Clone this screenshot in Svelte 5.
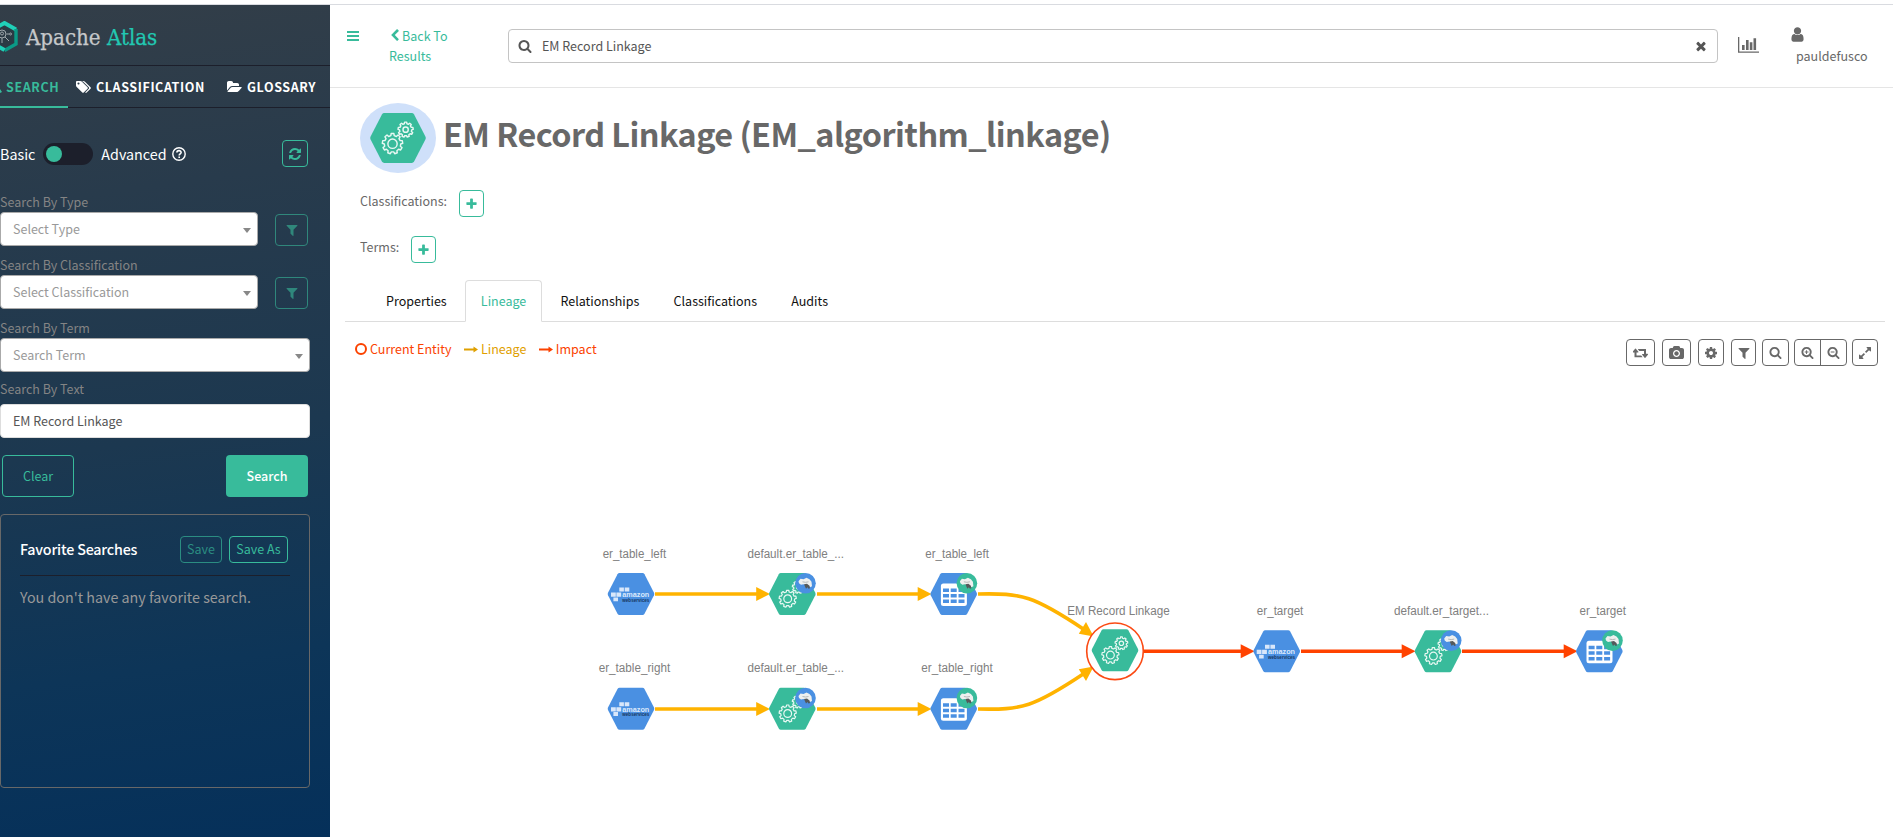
<script>
  const search = 'M1216 832q0-185-131.5-316.5t-316.5-131.5-316.5 131.5-131.5 316.5 131.5 316.5 316.5 131.5 316.5-131.5 131.5-316.5zm512 832q0 52-38 90t-90 38q-54 0-90-38l-343-342q-179 124-399 124-143 0-273.5-55.5t-225-150-150-225-55.5-273.5 55.5-273.5 150-225 225-150 273.5-55.5 273.5 55.5 225 150 150 225 55.5 273.5q0 220-124 399l343 343q37 37 37 90z';
  const plusBar = 'M704 576h128v192h192v128h-192v192h-128v-192h-192v-128h192z';
  const minusBar = 'M512 768h512v128h-512z';
  const filter = 'M1595 295q17 41-14 70l-493 493v742q0 42-39 59-13 5-25 5-27 0-45-19l-256-256q-19-19-19-45v-486l-493-493q-31-29-14-70 17-39 59-39h1280q42 0 59 39z';
  const refresh = 'M1639 1056q0 5-1 7-64 268-268 434.5t-478 166.5q-146 0-282.5-55t-243.5-157l-129 129q-19 19-45 19t-45-19-19-45v-448q0-26 19-45t45-19h448q26 0 45 19t19 45-19 45l-137 137q71 66 161 102t187 36q134 0 250-65t186-179q11-17 53-117 8-23 30-23h192q13 0 22.5 9.5t9.5 22.5zm25-800v448q0 26-19 45t-45 19h-448q-26 0-45-19t-19-45 19-45l138-138q-148-137-349-137-134 0-250 65t-186 179q-11 17-53 117-8 23-30 23h-199q-13 0-22.5-9.5t-9.5-22.5v-7q65-268 270-434.5t480-166.5q146 0 284 55.5t245 156.5l130-129q19-19 45-19t45 19 19 45z';
  const camera = 'M896 672q119 0 203.5 84.5t84.5 203.5-84.5 203.5-203.5 84.5-203.5-84.5-84.5-203.5 84.5-203.5 203.5-84.5zm704-416q106 0 181 75t75 181v896q0 106-75 181t-181 75h-1408q-106 0-181-75t-75-181v-896q0-106 75-181t181-75h224l51-136q19-49 69.5-84.5t103.5-35.5h512q53 0 103.5 35.5t69.5 84.5l51 136h224zm-704 1152q185 0 316.5-131.5t131.5-316.5-131.5-316.5-316.5-131.5-316.5 131.5-131.5 316.5 131.5 316.5 316.5 131.5z';
  const cog = 'M1152 896q0-106-75-181t-181-75-181 75-75 181 75 181 181 75 181-75 75-181zm512-109v222q0 12-8 23t-20 13l-185 28q-19 54-39 91 35 50 107 138 10 12 10 25t-9 23q-27 37-99 108t-94 71q-12 0-26-9l-138-108q-44 23-91 38-16 136-29 186-7 28-36 28h-222q-14 0-24.5-8.5t-11.5-21.5l-28-184q-49-16-90-37l-141 107q-10 9-25 9-14 0-25-11-126-114-165-168-7-10-7-23 0-12 8-23 15-21 51-66.5t54-70.5q-27-50-41-99l-183-27q-13-2-21-12.5t-8-23.5v-222q0-12 8-23t19-13l186-28q14-46 39-92-40-57-107-138-10-12-10-24 0-10 9-23 26-36 98.5-107.5t94.5-71.5q13 0 26 10l138 107q44-23 91-38 16-136 29-186 7-28 36-28h222q14 0 24.5 8.5t11.5 21.5l28 184q49 16 90 37l142-107q9-9 24-9 13 0 25 10 129 119 165 170 7 8 7 22 0 12-8 23-15 21-51 66.5t-54 70.5q26 50 41 98l183 28q13 2 21 12.5t8 23.5z';
  const times = 'M1490 1322q0 40-28 68l-136 136q-28 28-68 28t-68-28l-294-294-294 294q-28 28-68 28t-68-28l-136-136q-28-28-28-68t28-68l294-294-294-294q-28-28-28-68t28-68l136-136q28-28 68-28t68 28l294 294 294-294q28-28 68-28t68 28l136 136q28 28 28 68t-28 68l-294 294 294 294q28 28 28 68z';
  const plus = 'M1600 736v192q0 40-28 68t-68 28h-416v416q0 40-28 68t-68 28h-192q-40 0-68-28t-28-68v-416h-416q-40 0-68-28t-28-68v-192q0-40 28-68t68-28h416v-416q0-40 28-68t68-28h192q40 0 68 28t28 68v416h416q40 0 68 28t28 68z';
  const folder = 'M1879 952q0 31-31 66l-336 396q-43 51-120.5 86.5t-143.5 35.5h-1088q-34 0-60.5-13t-26.5-43q0-31 31-66l336-396q43-51 120.5-86.5t143.5-35.5h1088q34 0 60.5 13t26.5 43zm-343-344v160h-832q-94 0-197 47.5t-164 119.5l-337 396-5 6q0-4-.5-12.5t-.5-12.5v-960q0-92 66-158t158-66h320q92 0 158 66t66 158v32h544q92 0 158 66t66 158z';
  const tags = 'M576 448q0-53-37.5-90.5t-90.5-37.5-90.5 37.5-37.5 90.5 37.5 90.5 90.5 37.5 90.5-37.5 37.5-90.5zm1067 576q0 53-37 90l-491 492q-39 37-91 37-53 0-90-37l-715-716q-38-37-64.5-101t-26.5-117v-416q0-52 38-90t90-38h416q53 0 117 26.5t102 64.5l715 714q37 39 37 91zm384 0q0 53-37 90l-491 492q-39 37-91 37-36 0-59-14t-53-45l470-470q37-37 37-90 0-52-37-91l-715-714q-38-38-102-64.5t-117-26.5h224q53 0 117 26.5t102 64.5l715 714q37 39 37 91z';
  const retweet = 'M1216 1408q0 13-9.500 22.500t-22.500 9.500h-960q-32 0-32-32v-576h-192q-26 0-45-19t-19-45q0-24 15-41l320-384q19-22 49-22t49 22l320 384q15 17 15 41 0 26-19 45t-45 19h-192v384h576q16 0 25 11l160 192q7 11 7 21zm704-320q0 24-15 41l-320 384q-20 23-49 23t-49-23l-320-384q-15-17-15-41 0-26 19-45t45-19h192v-384h-576q-16 0-25-12l-160-192q-7-9-7-20 0-13 9.500-22.500t22.500-9.500h960q32 0 32 32v576h192q26 0 45 19t19 45z';
  const expand = 'M883 1056q0 13-10 23l-332 332 144 144q19 19 19 45t-19 45-45 19h-448q-26 0-45-19t-19-45v-448q0-26 19-45t45-19 45 19l144 144 332-332q10-10 23-10t23 10l114 114q10 10 10 23zm781-864v448q0 26-19 45t-45 19-45-19l-144-144-332 332q-10 10-23 10t-23-10l-114-114q-10-10-10-23t10-23l332-332-144-144q-19-19-19-45t19-45 45-19h448q26 0 45 19t19 45z';
  const chevron = 'M1427 301l-531 531 531 531q19 19 19 45t-19 45l-166 166q-19 19-45 19t-45-19l-742-742q-19-19-19-45t19-45l742-742q19-19 45-19t45 19l166 166q19 19 19 45t-19 45z';
  const user = 'M1536 1399q0 109-62.500 187t-150.500 78h-854q-88 0-150.500-78t-62.500-187q0-85 8.500-160.500t31.500-152 58.500-131 94-89 134.500-34.500q131 128 313 128t313-128q76 0 134.500 34.500t94 89 58.500 131 31.500 152 8.500 160.500zm-256-887q0 159-112.500 271.500t-271.500 112.500-271.500-112.500-112.500-271.500 112.500-271.500 271.500-112.500 271.500 112.500 112.500 271.500z';

  // Closed outline of a cog with flat teeth
  function gear(cx, cy, r, teeth, depth) {
    let d = '';
    const step = (Math.PI * 2) / teeth;
    for (let i = 0; i < teeth; i++) {
      const a = i * step - Math.PI / 2;
      for (const [t, rad] of [[-0.3, r - depth], [-0.19, r], [0.19, r], [0.3, r - depth]]) {
        const x = cx + Math.cos(a + t * step) * rad;
        const y = cy + Math.sin(a + t * step) * rad;
        d += `${d ? 'L' : 'M'}${x.toFixed(2)} ${y.toFixed(2)}`;
      }
    }
    return d + 'Z';
  }
  const bigGear = gear(-4.6, 4.8, 8.6, 9, 1.7);
  const smallGear = gear(6.4, -7, 6.4, 9, 1.3);
  const hexagon = 'M-11.500 -21H11.500Q12.800 -21 13.500 -19.800L23 -1.200Q23.600 0 23 1.200L13.500 19.800Q12.800 21 11.500 21H-11.500Q-12.800 21 -13.500 19.800L-23 1.200Q-23.600 0 -23 -1.200L-13.500 -19.800Q-12.800 -21 -11.500 -21Z';

  const nodes = [
    { x: 631, y: 594, kind: 'aws', label: 'er_table_left', w: 63.5 },
    { x: 792.3, y: 594, kind: 'process', label: 'default.er_table_...', w: 96.5 },
    { x: 953.7, y: 594, kind: 'table', label: 'er_table_left', w: 63.5 },
    { x: 631, y: 708.7, kind: 'aws', label: 'er_table_right', w: 71.5 },
    { x: 792.3, y: 708.7, kind: 'process', label: 'default.er_table_...', w: 96.5 },
    { x: 953.7, y: 708.7, kind: 'table', label: 'er_table_right', w: 71.5 },
    { x: 1115, y: 650.3, kind: 'current', label: 'EM Record Linkage', w: 102.5 },
    { x: 1276.7, y: 651.3, kind: 'aws', label: 'er_target', w: 46.5 },
    { x: 1438, y: 651.3, kind: 'process', label: 'default.er_target...', w: 95 },
    { x: 1599.3, y: 651.3, kind: 'table', label: 'er_target', w: 46.5 }
  ];
  const edges = [
    { x1: 655, x2: 769.500, y: 594, c: '#ffb300' },
    { x1: 817, x2: 931, y: 594, c: '#ffb300' },
    { x1: 655, x2: 769.500, y: 709, c: '#ffb300' },
    { x1: 817, x2: 931, y: 709, c: '#ffb300' },
    { x1: 1144, x2: 1254, y: 651.300, c: '#ff4200' },
    { x1: 1301, x2: 1415, y: 651.300, c: '#ff4200' },
    { x1: 1462, x2: 1577, y: 651.300, c: '#ff4200' }
  ];
  const tabs = ['Properties', 'Lineage', 'Relationships', 'Classifications', 'Audits'];
</script>

{#snippet icon(d, w, h, box = '0 0 1792 1792')}
  <svg class="icon" width={w} height={h} viewBox={box} fill="currentColor"><path {d} /></svg>
{/snippet}

{#snippet gears()}
  <g fill="none" stroke="#e9f8f3" stroke-width="1.200" stroke-linejoin="round">
    <path d={bigGear} /><circle cx="-4.600" cy="4.800" r="3.900" />
    <path d={smallGear} /><circle cx="6.400" cy="-7" r="2.200" />
  </g>
{/snippet}

{#snippet badge(fill)}
  <g transform="translate(13.200 -10.700)">
    <circle r="10.300" {fill} />
    <path d="M-7 -2L-5 -4.500L-2 -4L1 -5.500L4 -4L6 -1.500L6.500 3L4.500 4L3 2.500L0 2L-2 1L-4.500 1.500L-6.500 0Z" fill="#eef0ef" />
    <path d="M-1.500 1L1.500 .500L4 2.500L4.500 5L3 5.500L2 4L.500 5.500Z" fill="#54595b" />
    <path d="M-3 -1.500L0 -1L3 -1.500" fill="none" stroke="#a5a9a9" stroke-width=".8" />
  </g>
{/snippet}

<div class="page">
  <aside class="sidebar">
    <div class="brand">
      <svg width="19" height="32" viewBox="0 0 19 32">
        <path d="M4.500 3L16 9.500V22.500L4.500 29L-7 22.500V9.500Z" fill="#2b3a44" />
        <path d="M-8 9L4.500 2L16 8.500" fill="none" stroke="#20cfb8" stroke-width="4" />
        <path d="M16 8V23L4.500 29.500" fill="none" stroke="#0b9a86" stroke-width="3.400" />
        <path d="M4.500 29L-8 22" fill="none" stroke="#20cfb8" stroke-width="4" />
        <g fill="none" stroke="#9fa8ad" stroke-width="1"><circle cx="2" cy="13" r="4" /><circle cx="2" cy="12.500" r="1.500" /><path d="M5 16L9 20M6.500 13H9M2 17V22M-1 18L-4 22" /><circle cx="10.500" cy="13" r="1" /></g>
      </svg>
      <span class="name">Apache <b>Atlas</b></span>
    </div>
    <nav class="sidetabs">
      <span class="st active"><svg class="tail" width="2" height="4"><path d="M0 0L2 3L0 4Z" fill="currentColor" /></svg>SEARCH</span>
      <span class="st cl">{@render icon(tags, 16, 14, '0 0 2048 1792')}CLASSIFICATION</span>
      <span class="st gl">{@render icon(folder, 15, 14, '0 0 1920 1792')}GLOSSARY</span>
    </nav>
    <div class="mode">
      <span>Basic</span><i class="switch"><b></b></i><span>Advanced</span>
      <svg class="help" width="14" height="14" viewBox="0 0 14 14" fill="none" stroke="#fff" stroke-width="1.400"><circle cx="7" cy="7" r="6.200" /><path d="M4.900 5.600C4.900 2.900 9.200 3 9.100 5.500C9 7 7.200 6.900 7.200 8.500M7.200 9.600V11.100" stroke-width="1.600" /></svg>
      <button class="obtn refresh">{@render icon(refresh, 14, 14)}</button>
    </div>
    <div class="lab first">Search By Type</div>
    <div class="row"><div class="select">Select Type<i></i></div><button class="obtn fil">{@render icon(filter, 14, 14)}</button></div>
    <div class="lab">Search By Classification</div>
    <div class="row"><div class="select">Select Classification<i></i></div><button class="obtn fil">{@render icon(filter, 14, 14)}</button></div>
    <div class="lab">Search By Term</div>
    <div class="row"><div class="select wide">Search Term<i></i></div></div>
    <div class="lab text">Search By Text</div>
    <div class="input">EM Record Linkage</div>
    <div class="actions"><button class="obtn clear">Clear</button><button class="go">Search</button></div>
    <section class="fav">
      <header><h4>Favorite Searches</h4><button class="obtn save dim">Save</button><button class="obtn saveas">Save As</button></header>
      <p>You don't have any favorite search.</p>
    </section>
  </aside>

  <main>
    <header class="top">
      <svg class="bars" width="12" height="10" viewBox="0 0 12 10" fill="#38bb9b"><path d="M0 0h12v2H0zM0 4h12v2H0zM0 8h12v2H0z" /></svg>
      <a class="back">{@render icon(chevron, 14, 13, '200 0 1450 1792')}Back To<br />Results</a>
      <div class="searchbox">{@render icon(search, 14, 14)}<span>EM Record Linkage</span>{@render icon(times, 14, 14)}</div>
      <svg class="chart" width="21" height="16" viewBox="0 0 21 16" fill="#686868"><path d="M0 0h1.300v14.400H21v1.300H0zM4 8h2.600v5H4zM8 3h2.600v10H8zM11.800 5.300h2.600v7.700h-2.600zM15.500 1.300h2.600v11.700h-2.600z" /></svg>
      <div class="account">{@render icon(user, 17, 17)}<span>pauldefusco</span></div>
    </header>
    <div class="entity">
      <div class="avatar"><svg width="56" height="50" viewBox="-23.500 -21 47 42" preserveAspectRatio="none"><path d={hexagon} fill="#38bb9b" />{@render gears()}</svg></div>
      <h1>EM Record Linkage (EM_algorithm_linkage)</h1>
    </div>
    <div class="meta c"><span>Classifications:</span><button class="obtn add">{@render icon(plus, 13, 14)}</button></div>
    <div class="meta t"><span>Terms:</span><button class="obtn add">{@render icon(plus, 13, 14)}</button></div>
    <nav class="tabs">{#each tabs as t}<span class:on={t === 'Lineage'}>{t}</span>{/each}</nav>
    <div class="tools">
      <span class="leg red"><i class="ring"></i>Current Entity</span>
      <span class="leg gold"><svg width="14" height="7" viewBox="0 0 14 7"><path d="M0 2.500h9.500V0.500L14 3.500L9.500 6.500V4.500H0z" fill="currentColor" /></svg>Lineage</span>
      <span class="leg red"><svg width="14" height="7" viewBox="0 0 14 7"><path d="M0 2.500h9.500V0.500L14 3.500L9.500 6.500V4.500H0z" fill="currentColor" /></svg>Impact</span>
      <div class="buttons">
        <button class="tb b1">{@render icon(retweet, 15, 14, '0 0 1920 1792')}</button>
        <button class="tb b2">{@render icon(camera, 15, 14)}</button>
        <button class="tb b3">{@render icon(cog, 14, 14)}</button>
        <button class="tb b4">{@render icon(filter, 14, 14)}</button>
        <button class="tb b5">{@render icon(search, 13, 13)}</button>
        <div class="pair"><button>{@render icon(search + plusBar, 13, 13)}</button><button>{@render icon(search + minusBar, 13, 13)}</button></div>
        <button class="tb b7">{@render icon(expand, 14, 14)}</button>
      </div>
    </div>
    <svg class="graph" width="1563" height="467" viewBox="330 370 1563 467">
      {#each edges as e}
        <path d="M{e.x1} {e.y}H{e.x2 - 10}" stroke={e.c} stroke-width="3.600" fill="none" />
        <path d="M{e.x2 - 13.300} {e.y - 7}L{e.x2 + 0.500} {e.y}L{e.x2 - 13.300} {e.y + 7}Z" fill={e.c} />
      {/each}
      <g fill="none" stroke="#ffb300" stroke-width="3.600">
        <path d="M978 594C1022 593 1034 596 1084 629.500" />
        <path d="M978 709C1022 710 1034 707 1084 673.500" />
      </g>
      <path d="M1086 622L1093.700 636.500L1078.800 633.800ZM1078.800 669.200L1093.700 666.500L1086 681Z" fill="#ffb300" />
      <circle cx="1115" cy="651.300" r="28.300" fill="#fff" stroke="#fb4a14" stroke-width="1.600" />
      {#each nodes as n}
        <g transform="translate({n.x} {n.y})">
          <path d={hexagon} fill={n.kind === 'process' || n.kind === 'current' ? '#38bb9b' : '#4a90e2'} />
          {#if n.kind === 'aws'}
            <path d="M-11.700 -6.500h4.600v4h-4.600zM-6.300 -6.500h4.600v4h-4.600zM-20 -1.500h4.800v4.200h-4.800zM-14.600 -1.500h4.800v4.200h-4.800zM-17.600 3.400h4.600v3.800h-4.600z" fill="#d9e7fa" />
            <text x="-8.700" y="2.900" class="aws" textLength="27" lengthAdjust="spacingAndGlyphs" fill="#dce9fb">amazon</text>
            <text x="-8.700" y="7.600" class="aws small" textLength="27" lengthAdjust="spacingAndGlyphs" fill="#17375f">webservices</text>
          {:else if n.kind === 'table'}
            <rect x="-12.800" y="-10.500" width="26" height="22.500" rx="2.500" fill="#fff" />
            <path d="M-10.700 -5.500h6v3.500h-6zM-3 -5.500h6v3.500h-6zM4.800 -5.500h6v3.500h-6zM-10.700 0h6v3.500h-6zM-3 0h6v3.500h-6zM4.800 0h6v3.500h-6zM-10.700 5.600h6v3.500h-6zM-3 5.600h6v3.500h-6zM4.800 5.600h6v3.500h-6z" fill="#4a90e2" />
            {@render badge('#38bb9b')}
          {:else}
            {@render gears()}
            {#if n.kind === 'process'}{@render badge('#4a90e2')}{/if}
          {/if}
        </g>
        <text class="nl" x={n.x + 3.400 - n.w / 2} y={n.kind === 'current' ? 615 : n.y - 36.300} textLength={n.w} lengthAdjust="spacingAndGlyphs">{n.label}</text>
      {/each}
    </svg>
  </main>
</div>

<style>
  :global(body) { margin: 0; background: #fff; overflow: hidden; }
  * { box-sizing: border-box; }
  .page { display: flex; width: 1893px; height: 837px; padding-top: 4px; font: 12.5px/20px 'Noto Sans CJK SC', 'Noto Sans', sans-serif; color: #686868; }
  button { font: inherit; padding: 0; margin: 0; background: none; display: flex; align-items: center; justify-content: center; flex: none; }
  .icon { display: block; flex: none; }
  .sidebar { width: 330px; height: 833px; flex: none; border-top: 1px solid #d9dbe0; background: linear-gradient(172deg, #333e48 0%, #283b4c 23%, #1c3850 52%, #0d3558 78%, #05305a 100%); overflow: hidden; }
  .brand { height: 61px; display: flex; align-items: center; padding-top: 4px; border-bottom: 1px solid #1c1f2b; }
  .brand svg { flex: none; margin-right: 7px; }
  .name { font: 22.1px/30px 'DejaVu Serif Condensed', 'DejaVu Serif', serif; color: #c6c8ca; white-space: nowrap; -webkit-text-stroke: .25px currentColor; }
  .name b { font-weight: 400; color: #22c8b2; }
  .sidetabs { height: 42px; display: flex; border-bottom: 1px solid #1c1f2b; color: #fff; font-weight: 700; letter-spacing: .6px; white-space: nowrap; }
  .st { display: flex; align-items: center; height: 42px; }
  .st.active { width: 68px; color: #38bb9b; border-bottom: 2px solid #38bb9b; padding-top: 1px; }
  .tail { margin: 8px 4px 0 0; }
  .cl { width: 159px; padding-left: 7px; }
  .cl .icon, .gl .icon { margin-right: 5px; }
  .mode { display: flex; align-items: center; height: 27px; margin-top: 32px; color: #fff; font-size: 14.3px; width: 308px; }
  .switch { width: 50px; height: 22px; border-radius: 11px; background: #1c1f2b; margin: 0 8px; padding: 3px; }
  .switch b { display: block; width: 16px; height: 16px; border-radius: 50%; background: #38bb9b; }
  .help { margin-left: 5px; }
  .obtn { border: 1px solid #38bb9b; border-radius: 4px; color: #38bb9b; }
  .refresh { width: 26px; height: 27px; margin-left: auto; }
  .lab { display: block; height: 29px; padding-top: 9px; line-height: 20px; color: #848484; }
  .lab.first { height: 45px; padding-top: 25px; }
  .lab.text { height: 32px; padding-top: 7px; }
  .row { display: flex; height: 34px; gap: 17px; align-items: flex-end; }
  .select, .input { width: 258px; height: 34px; padding: 0 12px; line-height: 32px; background: #fff; border: 1px solid #aaa; border-radius: 4px; color: #999; }
  .select { display: flex; justify-content: space-between; align-items: center; padding-right: 6px; }
  .select i { border: 4px solid transparent; border-top: 5px solid #888; border-bottom: 0; margin-top: 3px; }
  .wide, .input { width: 310px; }
  .input { border-color: #ddd; color: #555; }
  .fil { width: 33px; height: 32px; opacity: .6; }
  .actions { display: flex; justify-content: space-between; width: 308px; padding: 17px 0 17px 2px; }
  .clear { width: 72px; height: 42px; }
  .go { width: 82px; height: 42px; border: 0; border-radius: 4px; background: #38bb9b; color: #fff; font-weight: 500; }
  .fav { width: 310px; height: 274px; border: 1px solid #686868; border-radius: 4px; padding: 21px 19px; }
  .fav header { display: flex; height: 40px; border-bottom: 1px solid #1c1f2b; }
  h4 { margin: 0; width: 160px; font-size: 14.3px; line-height: 26px; font-weight: 500; letter-spacing: -.2px; color: #fff; white-space: nowrap; }
  .save { width: 42px; height: 27px; margin-right: 7px; padding-bottom: 1px; }
  .saveas { width: 59px; height: 27px; padding-bottom: 1px; }
  .dim { opacity: .65; }
  .fav p { margin: 10px 0 0; font-size: 14.3px; line-height: 22px; color: #999; white-space: nowrap; }

  main { width: 1563px; border-top: 1px solid #d9dbe0; }
  .top { display: flex; height: 83px; border-bottom: 1px solid #e5e5e5; align-items: flex-start; }
  .bars { margin: 26px 0 0 17px; flex: none; }
  .back { width: 119px; margin: 21px 0 0 30px; color: #38bb9b; flex: none; }
  .back .icon { display: inline-block; margin: 0 0 -1px -1px; }
  .searchbox { display: flex; align-items: center; width: 1210px; height: 34px; margin-top: 24px; padding: 0 9px; border: 1px solid #c4c4c4; border-radius: 4px; color: #555; flex: none; }
  .searchbox span { flex: 1; padding-left: 10px; }
  .chart { margin: 32px 0 0 20px; flex: none; }
  .account { margin: 21px 0 0 30px; }
  .account span { display: block; margin: 3px 0 0 7px; }
  .entity { display: flex; margin: 15px 0 0 30px; height: 70px; }
  .avatar { width: 76px; height: 70px; border-radius: 38px / 35px; background: #cfe0fa; display: flex; align-items: center; justify-content: center; }
  h1 { margin: 5px 0 0 7px; font-size: 32.4px; line-height: 50px; font-weight: 700; letter-spacing: -.55px; white-space: nowrap; }
  .meta { display: flex; padding-left: 30px; height: 27px; }
  .meta span { line-height: 22px; }
  .c { margin-top: 17px; }
  .t { margin-top: 19px; }
  .add { width: 25px; height: 27px; margin-left: 12px; }
  .tabs { display: flex; margin: 17px 8px 0 15px; height: 42px; padding-left: 25px; border-bottom: 1px solid #ddd; color: #111; }
  .tabs span { height: 42px; padding: 0 15px; margin-right: 2.2px; line-height: 40px; border: 1px solid transparent; }
  .tabs .on { color: #38bb9b; background: #fff; border-color: #ddd #ddd #fff; border-radius: 4px 4px 0 0; }
  .tools { display: flex; height: 48px; padding: 17px 15px 0 25px; }
  .leg { display: flex; align-items: center; height: 20px; gap: 3px; margin-right: 12.5px; }
  .red { color: #fb4200; }
  .gold { color: #dfa000; }
  .ring { width: 12px; height: 12px; border: 2px solid; border-radius: 50%; }
  .buttons { display: flex; margin-left: auto; height: 27px; }
  .buttons button { height: 27px; color: #686868; }
  .tb { border: 1px solid #686868; border-radius: 4px; }
  .b1, .b2 { width: 29px; margin-right: 7px; }
  .b3 { width: 26px; margin-right: 7px; }
  .b4 { width: 25px; margin-right: 6px; }
  .b5 { width: 27px; margin-right: 5px; }
  .b7 { width: 26px; }
  .buttons .pair { display: flex; width: 53px; border: 1px solid #686868; border-radius: 4px; margin-right: 5px; }
  .buttons .pair button { width: 26px; height: 25px; border: 0; border-right: 1px solid #686868; }
  .buttons .pair button + button { width: 25px; border: 0; }
  .graph { display: block; }
  .nl { font: 12px 'Liberation Sans', Arial, sans-serif; fill: #808080; }
  .aws { font: 700 7.500px 'Liberation Sans', Arial, sans-serif; }
  .small { font-size: 5px; }
</style>
